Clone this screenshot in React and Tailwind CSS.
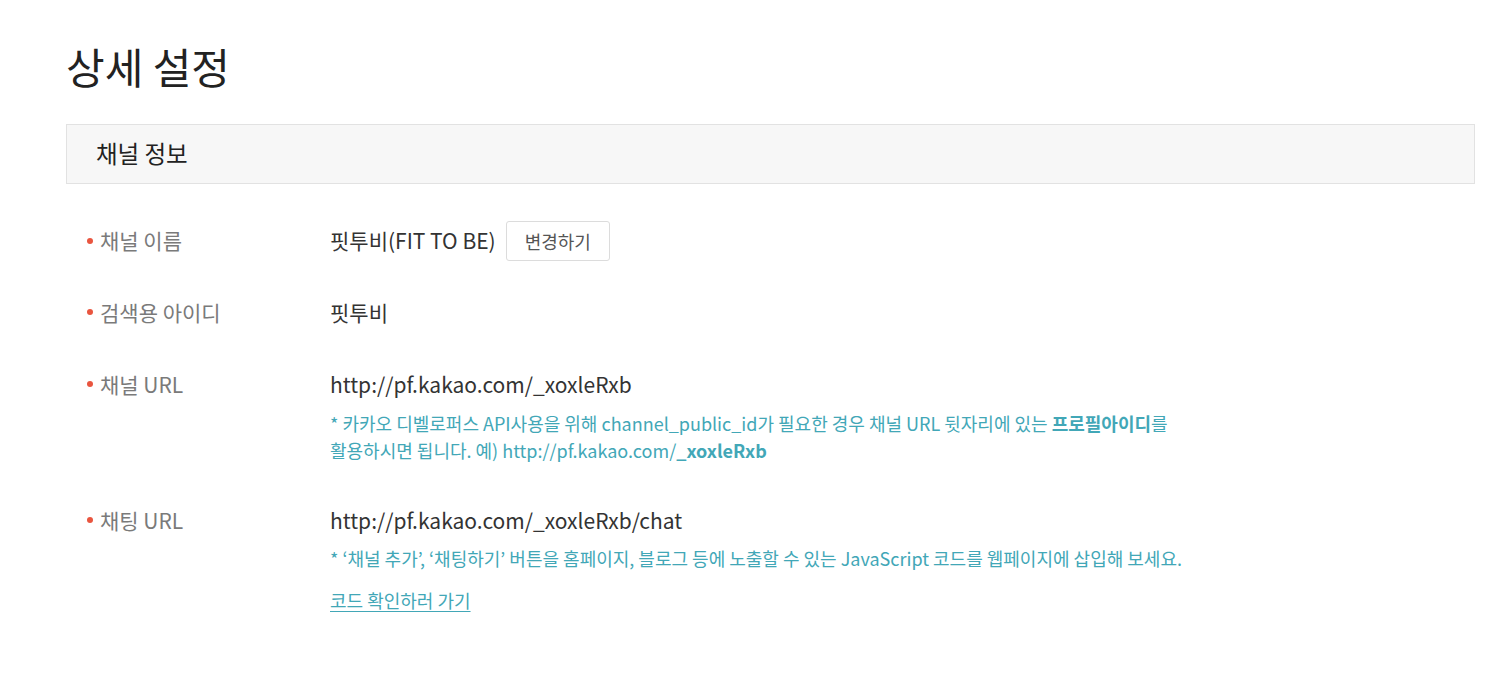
import React from 'react'

const font = { fontFamily: '"Noto Sans CJK KR", "Noto Sans", sans-serif' }

const Label = ({ children }) => (
  <div className="flex items-center pl-[21px] text-[21px] text-[#7a7a7a]">
    <span className="mr-[7px] inline-block h-[6px] w-[6px] rounded-full bg-[#e9553f]" />
    {children}
  </div>
)

export default function App() {
  return (
    <div className="min-h-screen bg-white pl-[66px] pr-[20px] pt-[38px] text-[#333]" style={font}>
      <h1 className="text-[42px] leading-[56px] font-normal text-[#222]">상세 설정</h1>

      <div className="mt-[30px] flex h-[60px] items-center border border-[#e2e2e2] bg-[#f7f7f7] pl-[29px]">
        <h2 className="text-[23.5px] text-[#222]">채널 정보</h2>
      </div>

      <div className="flex flex-col">
        {/* 채널 이름 */}
        <div className="mt-[37px] flex h-[40px] items-center">
          <div className="w-[264px] shrink-0"><Label>채널 이름</Label></div>
          <div className="flex items-center text-[21px]">
            <span>핏투비(FIT TO BE)</span>
            <button className="ml-[10px] h-[40px] rounded-[3px] border border-[#dcdcdc] bg-white px-[18px] text-[18px] text-[#555]">
              변경하기
            </button>
          </div>
        </div>

        {/* 검색용 아이디 */}
        <div className="mt-[36px] flex leading-[30px]">
          <div className="w-[264px] shrink-0"><Label>검색용 아이디</Label></div>
          <div className="text-[21px]">핏투비</div>
        </div>

        {/* 채널 URL */}
        <div className="mt-[42px] flex">
          <div className="w-[264px] shrink-0 leading-[30px]"><Label>채널 URL</Label></div>
          <div>
            <div className="text-[21px] leading-[30px]">http://pf.kakao.com/_xoxleRxb</div>
            <p className="mt-[11px] text-[18px] leading-[27px] text-[#42a7b7]">
              * 카카오 디벨로퍼스 API사용을 위해 channel_public_id가 필요한 경우 채널 URL 뒷자리에 있는 <b className="font-bold">프로필아이디</b>를
              <br />
              활용하시면 됩니다. 예) http://pf.kakao.com/<b className="font-bold">_xoxleRxb</b>
            </p>
          </div>
        </div>

        {/* 채팅 URL */}
        <div className="mt-[41px] flex">
          <div className="w-[264px] shrink-0 leading-[30px]"><Label>채팅 URL</Label></div>
          <div>
            <div className="text-[21px] leading-[30px]">http://pf.kakao.com/_xoxleRxb/chat</div>
            <p className="mt-[10px] text-[18px] leading-[27px] text-[#42a7b7]">
              * ‘채널 추가’, ‘채팅하기’ 버튼을 홈페이지, 블로그 등에 노출할 수 있는 JavaScript 코드를 웹페이지에 삽입해 보세요.
            </p>
            <a href="#" className="mt-[15px] inline-block text-[18px] leading-[27px] text-[#42a7b7] underline underline-offset-[3px]">
              코드 확인하러 가기
            </a>
          </div>
        </div>
      </div>
    </div>
  )
}
